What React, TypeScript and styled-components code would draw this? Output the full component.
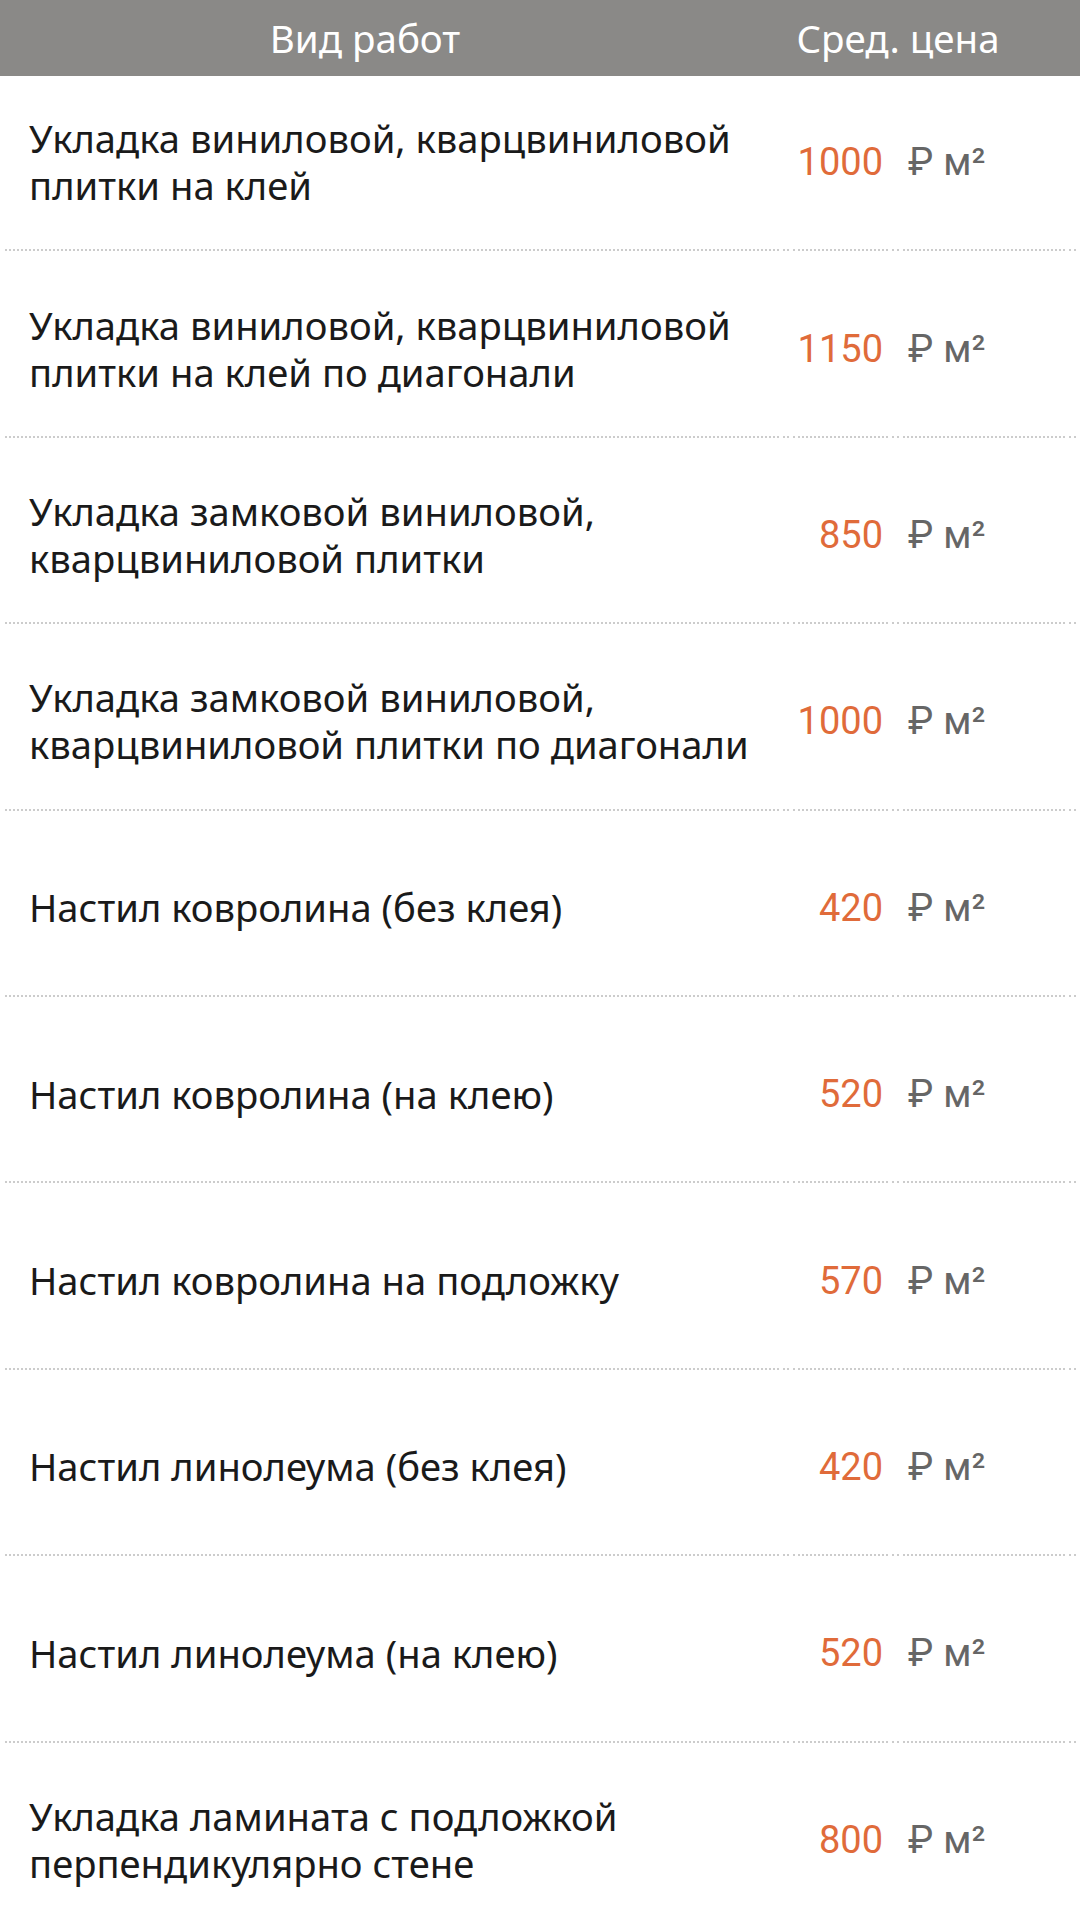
import React from 'react';
import styled, { createGlobalStyle } from 'styled-components';

const GlobalStyle = createGlobalStyle`
  html, body {
    margin: 0;
    padding: 0;
    background: #ffffff;
    font-family: Roboto, "Noto Sans", "Liberation Sans", sans-serif;
  }
`;

const Page = styled.div`
  width: 1080px;
  height: 1920px;
  overflow: hidden;
  background: #ffffff;
`;

// шапка таблицы остаётся сверху, строки прокручены под неё
const Header = styled.div`
  position: sticky;
  top: 0;
  z-index: 2;
  height: 76px;
  display: grid;
  grid-template-columns: 730px 336px;
  align-items: center;
  background: #8a8987;
  color: #ffffff;
  font-family: "Noto Sans", Roboto, sans-serif;
  font-size: 38.5px;
`;

const HeaderCell = styled.div`
  text-align: center;
  line-height: 1;
  padding-top: 1px;
`;

const List = styled.div`
  margin-top: -11px;
`;

const Row = styled.div`
  height: 186.4px;
  display: flex;
  gap: 4px;
  padding-left: 5px;
  box-sizing: border-box;
`;

const Cell = styled.div<{ $w: number }>`
  width: ${(p) => p.$w}px;
  flex: none;
  display: flex;
  align-items: center;
  box-sizing: border-box;
  padding-top: 10px;
  border-bottom: 2px dotted #cccccc;
`;

const NameCell = styled(Cell)`
  padding-left: 24px;
  font-family: "Noto Sans", Roboto, sans-serif;
  font-size: 38.2px;
  line-height: 47px;
  color: #1a1a1a;
`;

const PriceCell = styled(Cell)`
  justify-content: flex-end;
  padding-right: 5px;
  font-size: 38px;
  color: #e06b3a;
`;

const UnitCell = styled(Cell)`
  padding-left: 5px;
  font-size: 38px;
  color: #666666;
  gap: 10px;
`;

const items = [
  ['Укладка виниловой, кварцвиниловой плитки на клей', '1000'],
  ['Укладка виниловой, кварцвиниловой плитки на клей по диагонали', '1150'],
  ['Укладка замковой виниловой, кварцвиниловой плитки', '850'],
  ['Укладка замковой виниловой, кварцвиниловой плитки по диагонали', '1000'],
  ['Настил ковролина (без клея)', '420'],
  ['Настил ковролина (на клею)', '520'],
  ['Настил ковролина на подложку', '570'],
  ['Настил линолеума (без клея)', '420'],
  ['Настил линолеума (на клею)', '520'],
  ['Укладка ламината с подложкой перпендикулярно стене', '800'],
];

export default function App() {
  return (
    <Page>
      <GlobalStyle />
      <Header>
        <HeaderCell>Вид работ</HeaderCell>
        <HeaderCell>Сред. цена</HeaderCell>
      </Header>
      <List>
        {items.map(([name, price], i) => (
          <Row key={i}>
            <NameCell $w={774}>{name}</NameCell>
            <Cell $w={6} />
            <PriceCell $w={95}>{price}</PriceCell>
            <Cell $w={7} />
            <UnitCell $w={162}>
              <span>₽</span>
              <span>м²</span>
            </UnitCell>
            <Cell $w={7} />
          </Row>
        ))}
      </List>
    </Page>
  );
}
